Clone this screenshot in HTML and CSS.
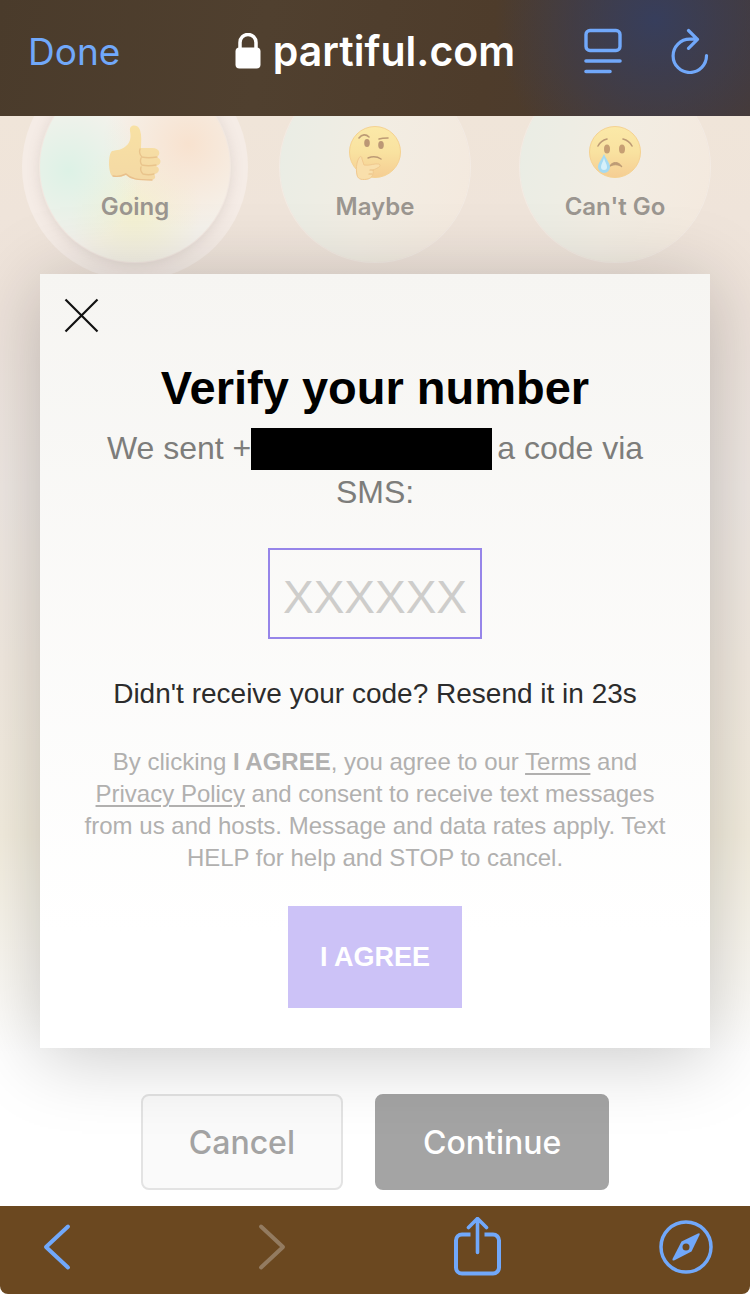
FILE: index.html
```html
<!DOCTYPE html>
<html lang="en">
<head>
    <meta charset="UTF-8">
    <meta name="viewport" content="width=device-width, initial-scale=1.0">
    <title>Verify your number</title>
    <link rel="stylesheet" href="styles.css">
</head>
<body>
    <header class="topbar">
        <button class="done" type="button">Done</button>
        <div class="address">
            <svg width="26" height="36" viewBox="0 0 26 36" aria-hidden="true">
                <path d="M5 16V9.500a8 8 0 0 1 16 0V16" fill="none" stroke="#fff" stroke-width="3.500"/>
                <rect x="0.500" y="14.500" width="25" height="21" rx="4" fill="#fff"/>
            </svg>
            <span>partiful.com</span>
        </div>
        <div class="topbar-icons">
            <button class="icon-button" type="button" aria-label="Reader">
                <svg width="40" height="46" viewBox="0 0 40 46">
                    <rect x="3" y="2.500" width="34" height="20" rx="4" fill="none" stroke="#71a8fa" stroke-width="3.400"/>
                    <path d="M3 33h34M3 43.500h24" stroke="#71a8fa" stroke-width="3.600" stroke-linecap="round"/>
                </svg>
            </button>
            <button class="icon-button" type="button" aria-label="Reload">
                <svg width="40" height="46" viewBox="0 0 40 46">
                    <path d="M36.500 27.500a16.700 16.700 0 1 1-16.700-16.400h7.500M18.500 2.500l9 8.800-9 9" fill="none" stroke="#71a8fa" stroke-width="3.200" stroke-linecap="round" stroke-linejoin="round"/>
                </svg>
            </button>
        </div>
    </header>

    <main class="page">
        <div class="rsvp">
            <button class="rsvp-option selected" type="button">
                <svg width="54" height="58" viewBox="0 0 54 58" aria-hidden="true">
                    <defs>
                        <linearGradient id="thumb" x1="0" y1="0" x2="0" y2="1">
                            <stop offset="0" stop-color="#f8e1a4"/>
                            <stop offset="1" stop-color="#f4d9a4"/>
                        </linearGradient>
                    </defs>
                    <path d="M4 27c5-1 10-1 14-5 5-4 5-10 4-15-1-7 8-7 10-1 2 6 1 12 1 18h11c9 0 9 8 4 9 6 1 6 8 0 9 5 2 3 8-2 8 3 4 0 6-4 6-11 0-19 0-24-5-5 2-9 3-14 1C0 48 0 30 4 27z" fill="url(#thumb)"/>
                    <path d="M32 25c-1 3 0 6 2 8 4 1 9 1 15 0M33 34c-1 3-1 5 1 7 4 1 9 1 14 0M33 43c-1 3 0 5 2 7 4 1 7 1 11 0" fill="none" stroke="#e9c48c" stroke-width="1.400" stroke-linecap="round"/>
                    <path d="M5 52c5 1 9 0 13-2 5 5 11 6 26 6" fill="none" stroke="#e9c08c" stroke-width="1.400" stroke-linecap="round"/>
                </svg>
                <span>Going</span>
            </button>
            <button class="rsvp-option" type="button">
                <svg width="54" height="58" viewBox="0 0 54 58" aria-hidden="true">
                    <defs>
                        <linearGradient id="face" x1="0" y1="0" x2="0" y2="1">
                            <stop offset="0" stop-color="#fbe9a8"/>
                            <stop offset="0.500" stop-color="#f9e2a0"/>
                            <stop offset="1" stop-color="#f5cd93"/>
                        </linearGradient>
                    </defs>
                    <circle cx="27" cy="28" r="25.500" fill="url(#face)" stroke="#f5d291" stroke-width="1"/>
                    <path d="M11 14c3-4 7-4 10-1M31 15c3-1 6-1 9-1" fill="none" stroke="#bd9b75" stroke-width="1.600" stroke-linecap="round"/>
                    <ellipse cx="19" cy="19" rx="2.800" ry="4" fill="#bb9775"/>
                    <ellipse cx="33" cy="21" rx="2.800" ry="4" fill="#bb9775"/>
                    <path d="M20 34c5-2 10-1 13 1" fill="none" stroke="#bd9b75" stroke-width="1.500" stroke-linecap="round"/>
                    <path d="M11 34c1-2 3-2 3 1l2 6c6 1 11-2 15-1 3 2-1 4-6 6 1 4-1 8-5 9-5 1-10 1-11-4-1-5-1-12 2-17z" fill="#f9dfab" stroke="#f1c98e" stroke-width="1"/>
                    <path d="M25 46h-3M24 50h-3" stroke="#e9bd82" stroke-width="1.200" stroke-linecap="round"/>
                </svg>
                <span>Maybe</span>
            </button>
            <button class="rsvp-option" type="button">
                <svg width="54" height="58" viewBox="0 0 54 58" aria-hidden="true">
                    <circle cx="27" cy="28" r="25.500" fill="url(#face)" stroke="#f5d291" stroke-width="1"/>
                    <path d="M10 22c2-4 5-6 9-7M44 22c-2-4-5-6-9-7" fill="none" stroke="#bd9b75" stroke-width="1.600" stroke-linecap="round"/>
                    <ellipse cx="19" cy="25" rx="3" ry="4.500" fill="#c69f73"/>
                    <ellipse cx="34" cy="25" rx="3" ry="4.500" fill="#c69f73"/>
                    <path d="M21 43c3-6 10-6 13 0-4-3-9-3-13 0z" fill="#bd9b75" stroke="#bd9b75" stroke-width="1"/>
                    <path d="M16 30c-2 5-6 9-6 13a6 6 0 0 0 12 0c0-4-4-8-6-13z" fill="#a5daf2"/>
                    <path d="M16 34c-1 4-3 6-3 9a3 3 0 0 0 6 0c0-3-2-5-3-9z" fill="#d6f0fa"/>
                </svg>
                <span>Can't Go</span>
            </button>
        </div>

        <section class="dialog" role="dialog" aria-labelledby="dialog-title">
            <button class="close" type="button" aria-label="Close">
                <svg width="36" height="36" viewBox="0 0 36 36">
                    <path d="M1.500 1.500l32 32M33.500 1.500l-32 32" stroke="#111" stroke-width="2.200"/>
                </svg>
            </button>
            <h1 id="dialog-title">Verify your number</h1>
            <p class="sent">We sent +<span class="redacted"></span> a code via SMS:</p>
            <input class="code" type="text" inputmode="numeric" maxlength="6" placeholder="XXXXXX" aria-label="Verification code">
            <p class="resend">Didn't receive your code? Resend it in 23s</p>
            <p class="legal">By clicking <strong>I AGREE</strong>, you agree to our <a href="#terms">Terms</a> and <a href="#privacy">Privacy Policy</a> and consent to receive text messages from us and hosts. Message and data rates apply. Text HELP for help and STOP to cancel.</p>
            <button class="agree" type="button">I AGREE</button>
        </section>

        <div class="actions">
            <button class="cancel" type="button">Cancel</button>
            <button class="continue" type="button">Continue</button>
        </div>
    </main>

    <nav class="toolbar">
        <button class="icon-button" type="button" aria-label="Back">
            <svg width="54" height="60" viewBox="0 0 54 60">
                <path d="M38 9.500L16 30l22 20.500" fill="none" stroke="#71a8fa" stroke-width="4" stroke-linecap="round" stroke-linejoin="round"/>
            </svg>
        </button>
        <button class="icon-button" type="button" aria-label="Forward" disabled>
            <svg width="54" height="60" viewBox="0 0 54 60">
                <path d="M21 9.500L43 30 21 50.500" fill="none" stroke="#937b60" stroke-width="4" stroke-linecap="round" stroke-linejoin="round"/>
            </svg>
        </button>
        <button class="icon-button" type="button" aria-label="Share">
            <svg width="54" height="60" viewBox="0 0 54 60">
                <path d="M21.500 17.500H13a6 6 0 0 0-6 6v27a6 6 0 0 0 6 6h31a6 6 0 0 0 6-6v-27a6 6 0 0 0-6-6h-8.500" fill="none" stroke="#71a8fa" stroke-width="4"/>
                <path d="M28.500 35.500V2M19.500 10.500l9-9 9 9" fill="none" stroke="#71a8fa" stroke-width="3.600" stroke-linecap="round" stroke-linejoin="round"/>
            </svg>
        </button>
        <button class="icon-button" type="button" aria-label="Open in browser">
            <svg width="54" height="60" viewBox="0 0 54 60">
                <circle cx="27" cy="30" r="25" fill="none" stroke="#71a8fa" stroke-width="3.500"/>
                <path d="M22.500 24.500L39 16.500q2.500-.8 1.500 1.500L32.500 34.500 15 43.500q-2 .5-1.500-1.500z" fill="#71a8fa"/>
                <circle cx="27" cy="30" r="3.500" fill="#6b4820"/>
            </svg>
        </button>
    </nav>
</body>
</html>
```

FILE: styles.css
```css
* {
    box-sizing: border-box;
}
body {
    margin: 0;
    min-height: 100vh;
    display: flex;
    flex-direction: column;
    background-color: #fff;
    font-family: Inter, "Liberation Sans", sans-serif;
}
button {
    padding: 0;
    border: none;
    background: none;
    font-family: inherit;
    cursor: pointer;
}
svg {
    display: block;
}

/* browser chrome */
.topbar {
    position: relative;
    z-index: 2;
    display: grid;
    grid-template-columns: 1fr auto 1fr;
    align-items: center;
    height: 116px;
    padding: 0 28px 14px;
    background: radial-gradient(circle at 655px 20px, #373e5c 0, rgba(55, 62, 92, 0) 160px), linear-gradient(100deg, #4a3b2b, #50402f 35%, #4e3c2b 65%, #483a34);
}
.done {
    justify-self: start;
    color: #71a8fa;
    font-size: 37px;
}
.address {
    display: flex;
    align-items: center;
    gap: 12px;
    color: #fff;
    font-size: 41px;
    font-weight: 600;
}
.topbar-icons {
    justify-self: end;
    display: flex;
    gap: 47px;
    padding-right: 12px;
}

/* event page */
.page {
    flex: 1;
    display: flex;
    flex-direction: column;
    overflow: hidden;
    background: linear-gradient(#f0e5d9 0, #eee3db 18%, #efe8e3 34%, #f2eae0 50%, #f4eedf 66%, #fff 86%);
}
.rsvp {
    display: flex;
    justify-content: space-between;
    margin-top: -44px;
    padding: 0 40px;
}
.rsvp-option {
    display: flex;
    flex-direction: column;
    align-items: center;
    gap: 10px;
    width: 190px;
    height: 190px;
    padding-top: 52px;
    border-radius: 50%;
    background: linear-gradient(100deg, #e9ede5, #f2ede3 50%, #f4e9de);
    box-shadow: 0 0 0 1px #f3ebe4;
    color: #9b9690;
    font-size: 24px;
    font-weight: 600;
}
.selected {
    background: radial-gradient(circle at 15% 52%, #ddf2e6 0, rgba(221, 242, 230, 0) 40%), radial-gradient(circle at 78% 38%, #f8e2cf 0, rgba(248, 226, 207, 0) 45%), radial-gradient(circle at 50% 72%, #f4f1cf 0, rgba(244, 241, 207, 0) 40%), #f5f2ec;
    box-shadow: 0 0 0 1px #f2e8e1, 0 2px 14px rgba(120, 100, 90, 0.18), 0 0 0 18px #f5ece6;
}

/* verification dialog */
.dialog {
    position: relative;
    z-index: 1;
    display: flex;
    flex-direction: column;
    align-items: center;
    margin: 12px 40px 46px;
    padding: 24px 40px 40px;
    background: linear-gradient(#f6f5f2, #fff 85%);
    box-shadow: 0 8px 72px rgba(0, 0, 0, 0.22);
    text-align: center;
}
.close {
    align-self: flex-start;
    margin-left: -16px;
}
h1 {
    margin: 24px 0 8px;
    font-family: "Liberation Sans", sans-serif;
    font-size: 47px;
    line-height: 60px;
}
p {
    margin: 0;
}
.sent {
    color: #7d7d7b;
    font-family: "Liberation Sans", sans-serif;
    font-size: 32px;
    line-height: 44px;
}
.redacted {
    display: inline-block;
    width: 241px;
    height: 42px;
    margin-right: -4px;
    background-color: #000;
    vertical-align: bottom;
}
.code {
    width: 214px;
    height: 91px;
    margin: 34px 0 37px;
    padding: 6px 0 0;
    border: 2px solid #9685e9;
    border-radius: 0;
    background: none;
    color: #333;
    font-family: "Liberation Sans", sans-serif;
    font-size: 46px;
    text-align: center;
    outline: none;
}
.code::placeholder {
    color: #cecdcb;
    opacity: 1;
}
.resend {
    color: #2c2c2c;
    font-family: "Liberation Sans", sans-serif;
    font-size: 28px;
    line-height: 36px;
}
.legal {
    margin: 34px 0 32px;
    color: #b1b0af;
    font-family: "Liberation Sans", sans-serif;
    font-size: 24px;
    line-height: 32px;
}
.legal a {
    color: inherit;
    text-decoration-thickness: 2px;
    text-underline-offset: 3px;
}
.agree {
    padding: 32px;
    background-color: #ccc2f7;
    color: #fff;
    font-family: "Liberation Sans", sans-serif;
    font-size: 27px;
    font-weight: bold;
    line-height: 38px;
}

.actions {
    display: flex;
    justify-content: center;
    gap: 32px;
    padding-bottom: 16px;
}
.cancel,
.continue {
    height: 96px;
    padding: 0 46px;
    border: 2px solid #e3e3e3;
    border-radius: 8px;
    background-color: #fafafa;
    color: #a3a3a3;
    font-size: 32px;
    font-weight: 500;
}
.continue {
    border-color: #a4a4a4;
    background-color: #a4a4a4;
    color: #fff;
}

.toolbar {
    display: flex;
    justify-content: space-between;
    height: 88px;
    padding: 11px 37px 0 30px;
    border-radius: 0 0 8px 8px;
    background-color: #6b4820;
}
.toolbar .icon-button {
    align-self: flex-start;
}
```
